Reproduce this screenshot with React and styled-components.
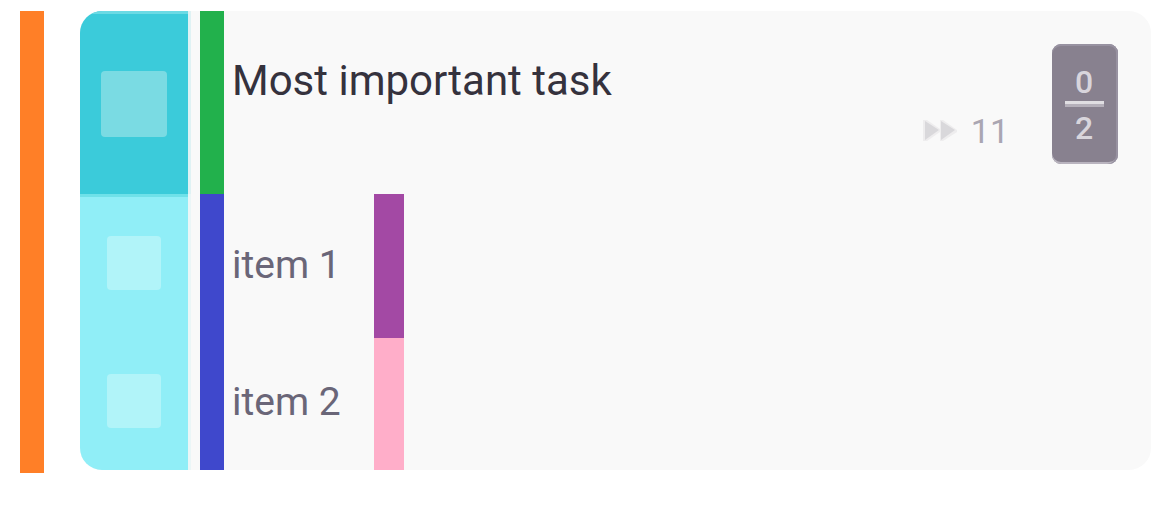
import React from "react";
import styled, { createGlobalStyle } from "styled-components";

const GlobalStyle = createGlobalStyle`
  * { box-sizing: border-box; }
  body {
    margin: 0;
    background: #ffffff;
    font-family: Roboto, "Liberation Sans", sans-serif;
  }
`;

const Page = styled.main`
  display: flex;
  gap: 36px;
  padding: 11px 25px 32px 20px;
`;

const Stripe = styled.div`
  flex: none;
  align-self: stretch;
  width: ${(p) => p.$width || 24}px;
  background: ${(p) => p.$color};
`;

const Card = styled.article`
  flex: 1;
  margin-bottom: 3px;
  border-radius: 22px;
  overflow: hidden;
  background: #f9f9f9;
`;

const Row = styled.div`
  display: flex;
  min-height: ${(p) => p.$height}px;
`;

const CheckCell = styled.label`
  flex: none;
  display: flex;
  align-items: center;
  justify-content: center;
  width: 108px;
  margin-right: 12px;
  padding-top: ${(p) => p.$drop || 0}px;
  padding-bottom: ${(p) => p.$lift || 0}px;
  background: ${(p) => p.$color};
  box-shadow: 3px 0 0 ${(p) => p.$shade}${(p) => (p.$edge ? `, inset 0 3px 0 ${p.$edge}` : "")};
`;

const Check = styled.input`
  appearance: none;
  width: ${(p) => p.$size}px;
  height: ${(p) => p.$size}px;
  margin: 0;
  border-radius: 4px;
  background: ${(p) => p.$color};
  cursor: pointer;

  &:checked { background: #ffffff; }
`;

const Title = styled.h1`
  flex: 1;
  margin: 0;
  padding: 46px 0 0 8px;
  color: #35323d;
  font-size: 42px;
  font-weight: 400;
  line-height: 48px;
`;

const Postponed = styled.div`
  display: flex;
  align-items: center;
  gap: 14px;
  align-self: flex-start;
  margin: 100px 43px 0 0;
  color: #aaa6b2;
  font-size: 34px;
  line-height: 40px;
`;

const Counter = styled.div`
  display: flex;
  flex-direction: column;
  align-items: center;
  align-self: flex-start;
  width: 66px;
  height: 120px;
  margin: 33px 33px 0 0;
  padding: 19px 2px 0 0;
  border-radius: 9px;
  background: #88818f;
  box-shadow: inset -2px 0 0 #9892a1, inset 0 2px 0 #9892a1, inset 0 -2px 0 #b9b4bf;
  color: #d8d5dc;
  font-size: 32px;
  font-weight: 500;
  line-height: 38px;
`;

const CounterLine = styled.div`
  width: 39px;
  height: 6px;
  margin-bottom: 2px;
  border-bottom: 3px solid #b5b0ba;
  background: #e0dee2;
`;

const ItemText = styled.label`
  display: flex;
  align-items: center;
  width: 150px;
  padding: 0 0 ${(p) => p.$lift}px 8px;
  color: #6a6678;
  font-size: 39px;
  line-height: 44px;
`;

const items = [
  { id: "item-1", text: "item 1", height: 144, stripe: "#a349a4", edge: "#6fe1e9", lift: 6, textLift: 2 },
  { id: "item-2", text: "item 2", height: 132, stripe: "#ffaec9", edge: null, lift: 6, textLift: 4 },
];

function ForwardIcon() {
  return (
    <svg width="34" height="22" viewBox="0 0 34 22" fill="#d9d8db" aria-hidden="true">
      <path d="M0 0 H4 L17 9 V0 H20 L34 10 V12 L20 21 H17 V12 L4 21 H0 Z" opacity="0.35" />
      <path d="M2 1 L16 10 L2 20 Z" />
      <path d="M18 1 L32 10 L18 20 Z" />
    </svg>
  );
}

export default function App() {
  return (
    <>
      <GlobalStyle />
      <Page>
        <Stripe $color="#ff7f27" />
        <Card>
          <Row $height={183}>
            <CheckCell $color="#3bcbda" $edge="#6bdae4" $shade="#dff2f4" $drop={3}>
              <Check type="checkbox" $size={66} $color="#7adbe3" aria-label="Most important task" />
            </CheckCell>
            <Stripe $color="#22b14c" />
            <Title>Most important task</Title>
            <Postponed>
              <ForwardIcon />
              <span>11</span>
            </Postponed>
            <Counter>
              <span>0</span>
              <CounterLine />
              <span>2</span>
            </Counter>
          </Row>
          {items.map((item) => (
            <Row key={item.id} $height={item.height}>
              <CheckCell $color="#90eef7" $edge={item.edge} $lift={item.lift} $shade="#ebf6f7">
                <Check type="checkbox" id={item.id} $size={54} $color="#b1f4f9" />
              </CheckCell>
              <Stripe $color="#3f48cc" />
              <ItemText htmlFor={item.id} $lift={item.textLift}>{item.text}</ItemText>
              <Stripe $width={30} $color={item.stripe} />
            </Row>
          ))}
        </Card>
      </Page>
    </>
  );
}
